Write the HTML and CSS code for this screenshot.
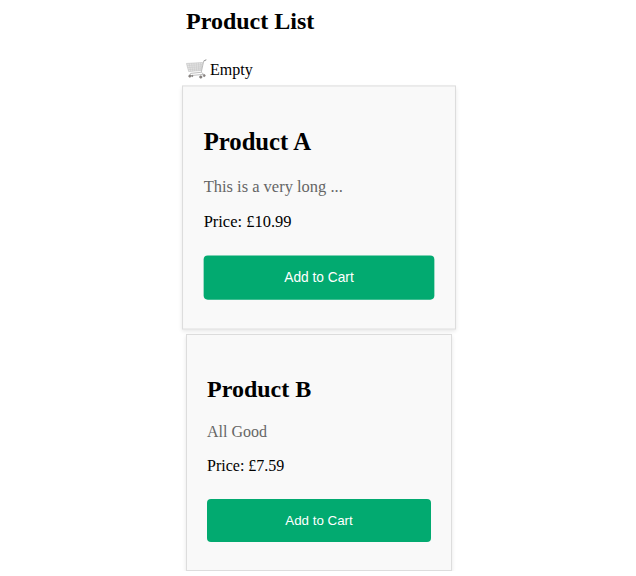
FILE: index.html
```html
<!DOCTYPE html>
<html lang="en">
<head>
<meta charset="utf-8">
<title>Product List</title>
<link rel="stylesheet" href="styles.css">
</head>
<body>
<main class="shop">
  <h2 class="heading">Product List</h2>
  <div class="cart">
    <svg class="cart-icon" viewBox="0 0 22 22" fill="none" aria-hidden="true">
      <path d="M.5 5.2 17.4 4.2 15.6 12.6 2.8 13.7Z" fill="#e4e4e4" stroke="#bbb" stroke-width=".6"/>
      <path d="M3.3 5.1 5 13.5M5.8 4.9 7 13.3M8.3 4.8 9 13.1M10.8 4.6 11 12.9M13.2 4.5 13 12.7M15.3 4.4 14.5 12.6M1.4 7.3 16.7 6.5M2 9.5 16.2 8.7M2.5 11.6 15.7 10.8" stroke="#c4c4c4" stroke-width=".5"/>
      <path d="M20.8 1.7 18.6 2.6 16 14.2 18.4 16.6 4 18 4.8 15.6 15.6 14.5" stroke="#aaa" stroke-width=".8" stroke-linejoin="round"/>
      <path d="M21 1.5 19.1 2.3" stroke="#999" stroke-width="1" stroke-linecap="round"/>
      <g fill="#8f8580" stroke="#777" stroke-width=".6">
        <circle cx="4" cy="18.5" r="1.2"/><circle cx="6.6" cy="18.3" r=".7"/>
        <circle cx="15.5" cy="19.4" r="1.3"/><circle cx="19.1" cy="17.9" r="1.1"/>
      </g>
    </svg>
    <span>Empty</span>
  </div>
  <div class="products">
    <article class="card card-active">
      <h2 class="name">Product A</h2>
      <p class="description">This is a very long ...</p>
      <p class="price">Price: £10.99</p>
      <button class="add">Add to Cart</button>
    </article>
    <article class="card">
      <h2 class="name">Product B</h2>
      <p class="description">All Good</p>
      <p class="price">Price: £7.59</p>
      <button class="add">Add to Cart</button>
    </article>
  </div>
</main>
</body>
</html>
```
FILE: styles.css
```css
body {
  margin: 0;
  background: #fff;
  color: #000;
  font: 16px/18px "Liberation Serif", "Times New Roman", serif;
}
.shop {
  width: 266px;
  margin-left: 186px;
  padding-top: 8px;
}
.heading, .name {
  font-size: 24px;
  line-height: 27px;
}
.heading { margin: 0 0 23px; }
.cart {
  display: flex;
  align-items: center;
  gap: 3px;
  height: 22px;
  margin-bottom: 9px;
}
.cart span { margin-top: 2px; }
.cart-icon { width: 21px; height: 22px; }
.products {
  display: flex;
  flex-direction: column;
  gap: 8px;
}
.card {
  box-sizing: border-box;
  height: 237px;
  padding: 20px;
  border: 1px solid #ddd;
  background: #f9f9f9;
  box-shadow: 0 2px 4px rgba(0, 0, 0, .1);
}
.card-active { transform: scale(1.03); }
.name { margin: 21px 0 20px; }
.description {
  margin: 0 0 16px;
  color: #666;
}
.price { margin: 0 0 24px; }
.add {
  display: block;
  width: 100%;
  padding: 14px 20px;
  border: 0;
  border-radius: 4px;
  background: #02aa70;
  color: #fff;
  font: 13.333px/15px "Liberation Sans", Arial, sans-serif;
}
```
